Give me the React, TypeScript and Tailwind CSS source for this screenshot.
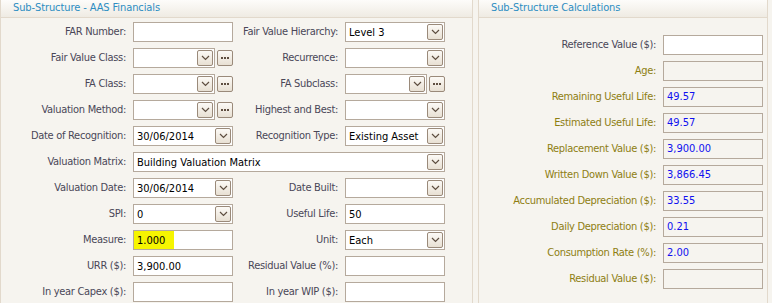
import React from "react";

const font = { fontFamily: '"DejaVu Sans Condensed", "DejaVu Sans", "Liberation Sans", sans-serif' };

function Chevron() {
  return (
    <span className="flex h-[16px] w-[16px] shrink-0 items-center justify-center rounded-[2px] border border-[#9a8a7a] bg-gradient-to-b from-[#fcfaf6] to-[#e8e0d3]">
      <svg width="9" height="6" viewBox="0 0 9 6">
        <path d="M1 1 L4.5 4.5 L8 1" fill="none" stroke="#5e4e40" strokeWidth="1.2" />
      </svg>
    </span>
  );
}

function Dots() {
  return (
    <span className="flex h-[16px] w-[16px] shrink-0 items-center justify-center rounded-[2px] border border-[#9a8a7a] bg-gradient-to-b from-[#fcfaf6] to-[#e8e0d3]">
      <svg width="10" height="4" viewBox="0 0 10 4">
        <rect x="1" y="1" width="2" height="2" fill="#5e4e40" />
        <rect x="4" y="1" width="2" height="2" fill="#5e4e40" />
        <rect x="7" y="1" width="2" height="2" fill="#5e4e40" />
      </svg>
    </span>
  );
}

type FieldProps = {
  value?: string;
  kind?: "text" | "select" | "lookup";
  highlight?: boolean;
  className?: string;
};

function Field({ value = "", kind = "text", highlight = false, className = "" }: FieldProps) {
  if (kind === "lookup") {
    return (
      <div className={"flex h-[20px] items-center gap-[2px] " + className}>
        <div className="flex h-[20px] flex-1 items-center border border-[#b5a99c] bg-white pr-[1px]">
          <span className="flex-1 pl-[3px] text-[11px] leading-none text-black">{value}</span>
          <Chevron />
        </div>
        <Dots />
      </div>
    );
  }
  return (
    <div className={"flex h-[20px] items-center border border-[#b5a99c] bg-white pr-[1px] " + className}>
      <span className="flex flex-1 items-center pl-[3px] text-[11px] leading-none text-black">
        {highlight ? (
          <span className="-ml-[3px] flex h-[18px] w-[40px] items-center bg-[#f6f500] pl-[3px]">{value}</span>
        ) : (
          value
        )}
      </span>
      {kind === "select" && <Chevron />}
    </div>
  );
}

function Label({ children, className = "" }: { children: React.ReactNode; className?: string }) {
  return (
    <div className={"flex h-[20px] items-center justify-end whitespace-nowrap text-[11px] tracking-[-0.3px] text-[#4a4758] " + className}>
      {children}
    </div>
  );
}

function Header({ children }: { children: React.ReactNode }) {
  return (
    <div className="flex h-[18px] items-center border-b border-[#e2d9cc] bg-gradient-to-b from-[#fdfcfa] to-[#efebe3] pl-[12px] text-[11px] tracking-[-0.1px] text-[#2c8dc2]">
      {children}
    </div>
  );
}

function CalcRow({ label, value, enabled = false, olive = true }: { label: string; value?: string; enabled?: boolean; olive?: boolean }) {
  return (
    <div className="flex h-[20px] items-center gap-[7px]">
      <div className={"flex w-[177px] justify-end whitespace-nowrap text-[11px] tracking-[-0.3px] " + (olive ? "text-[#8e7e12]" : "text-[#4a4758]")}>
        {label}
      </div>
      <div
        className={
          "flex h-[20px] w-[100px] items-center border border-[#b5a99c] pl-[3px] text-[11px] text-[#1010f0] " +
          (enabled ? "bg-white" : "bg-[#f6f4ef]")
        }
      >
        {value}
      </div>
    </div>
  );
}

export default function App() {
  return (
    <div style={font} className="flex h-[303px] w-[772px] overflow-hidden bg-[#f6f4ef]">
      <div className="h-[320px] w-[473px] shrink-0 border-x border-[#e2d9cc]">
        <Header>Sub-Structure - AAS Financials</Header>
        <div className="grid grid-cols-[125px_100px_98px_100px] gap-x-[7px] gap-y-[6px] pt-[4px]">
          <Label>FAR Number:</Label>
          <Field />
          <Label>Fair Value Hierarchy:</Label>
          <Field kind="select" value="Level 3" />

          <Label>Fair Value Class:</Label>
          <Field kind="lookup" />
          <Label>Recurrence:</Label>
          <Field kind="select" />

          <Label>FA Class:</Label>
          <Field kind="lookup" />
          <Label>FA Subclass:</Label>
          <Field kind="lookup" />

          <Label>Valuation Method:</Label>
          <Field kind="lookup" />
          <Label>Highest and Best:</Label>
          <Field kind="select" />

          <Label>Date of Recognition:</Label>
          <Field kind="select" value="30/06/2014" />
          <Label>Recognition Type:</Label>
          <Field kind="select" value="Existing Asset" />

          <Label>Valuation Matrix:</Label>
          <Field kind="select" value="Building Valuation Matrix" className="col-span-3" />

          <Label>Valuation Date:</Label>
          <Field kind="select" value="30/06/2014" />
          <Label>Date Built:</Label>
          <Field kind="select" />

          <Label>SPI:</Label>
          <Field kind="select" value="0" />
          <Label>Useful Life:</Label>
          <Field value="50" />

          <Label>Measure:</Label>
          <Field value="1.000" highlight />
          <Label>Unit:</Label>
          <Field kind="select" value="Each" />

          <Label>URR ($):</Label>
          <Field value="3,900.00" />
          <Label>Residual Value (%):</Label>
          <Field />

          <Label>In year Capex ($):</Label>
          <Field />
          <Label>In year WIP ($):</Label>
          <Field />
        </div>
      </div>
      <div className="ml-[5px] h-[320px] w-[290px] shrink-0 border-x border-[#e2d9cc]">
        <Header>Sub-Structure Calculations</Header>
        <div className="flex flex-col gap-[6px] pt-[17px]">
          <CalcRow label="Reference Value ($):" enabled olive={false} />
          <CalcRow label="Age:" />
          <CalcRow label="Remaining Useful Life:" value="49.57" />
          <CalcRow label="Estimated Useful Life:" value="49.57" />
          <CalcRow label="Replacement Value ($):" value="3,900.00" />
          <CalcRow label="Written Down Value ($):" value="3,866.45" />
          <CalcRow label="Accumulated Depreciation ($):" value="33.55" />
          <CalcRow label="Daily Depreciation ($):" value="0.21" />
          <CalcRow label="Consumption Rate (%):" value="2.00" />
          <CalcRow label="Residual Value ($):" />
        </div>
      </div>
    </div>
  );
}
